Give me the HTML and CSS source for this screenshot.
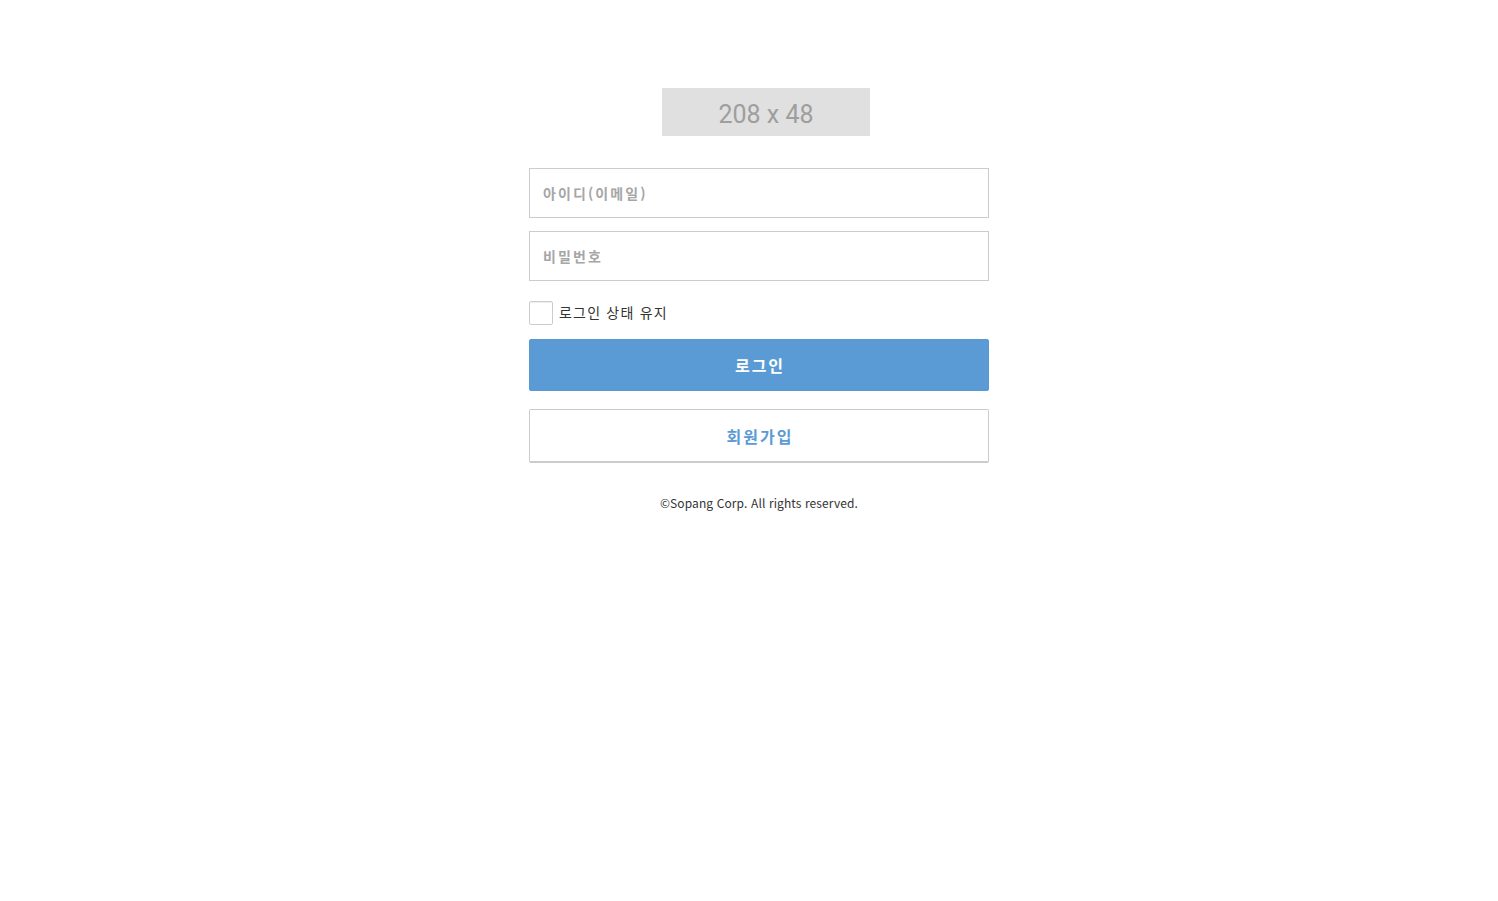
FILE: index.html
```html
<!DOCTYPE html>
<html lang="ko">
<head>
  <meta charset="UTF-8"/>
  <title>로그인</title>
  <link rel="stylesheet" href="styles.css">
</head>
<body>
<div class="page">
  <div class="login-box">
    <div class="logo">208 x 48</div>

    <form class="login-form" onsubmit="return false;">
      <input type="text" class="field" placeholder="아이디(이메일)">
      <input type="password" class="field" placeholder="비밀번호">

      <label class="keep-row">
        <input type="checkbox" class="keep-check">
        <span>로그인 상태 유지</span>
      </label>

      <button type="submit" class="btn-login">로그인</button>
      <button type="button" class="btn-join">회원가입</button>
    </form>

    <p class="copyright">&copy;Sopang Corp. All rights reserved.</p>
  </div>
</div>
</body>
</html>
```

FILE: styles.css
```css
body {
  margin: 0;
  background-color: #fff;
  font-family: "Noto Sans CJK KR", "Noto Sans", sans-serif;
  color: #333;
}
.page {
  width: 480px;
  margin: 0 auto;
  padding: 88px 0 0 20px;
  box-sizing: border-box;
}
.login-box {
  width: 460px;
}
.logo {
  width: 208px;
  height: 48px;
  margin-left: 133px;
  background-color: #e0e0e0;
  color: #9e9e9e;
  font-family: Roboto, "Liberation Sans", sans-serif;
  font-size: 25px;
  line-height: 54px;
  text-align: center;
}
.login-form {
  display: flex;
  flex-direction: column;
  margin-top: 32px;
}
.field {
  height: 50px;
  margin: 0 0 13px;
  padding: 0 13px;
  border: 1px solid #ccc;
  box-sizing: border-box;
  font-family: inherit;
  font-size: 14px;
  letter-spacing: 2.1px;
  outline: none;
}
.field::placeholder {
  color: #a6a6a6;
  font-weight: bold;
}
.keep-row {
  display: flex;
  align-items: center;
  gap: 6px;
  margin: 7px 0 14px;
  font-size: 14px;
  letter-spacing: 1.2px;
  line-height: 20px;
  color: #333;
  cursor: pointer;
}
.keep-row span {
  margin-top: -2px;
}
.keep-check {
  appearance: none;
  width: 24px;
  height: 24px;
  margin: 0;
  border: 1px solid #ccc;
  border-radius: 2px;
  box-sizing: border-box;
  background-color: #fff;
  box-shadow: inset 0 1px 0 #eee;
}
.keep-check:checked {
  background-color: #5b9bd5;
  border-color: #5b9bd5;
}
.btn-login {
  height: 52px;
  border: 1px solid #5899d3;
  border-radius: 2px;
  background-color: #5b9bd5;
  color: #fff;
  font-family: inherit;
  font-size: 16px;
  font-weight: bold;
  letter-spacing: 2px;
  text-indent: 2px;
  cursor: pointer;
}
.btn-join {
  height: 54px;
  margin-top: 18px;
  border: 1px solid #ccc;
  border-bottom-width: 2px;
  border-radius: 2px;
  background-color: #fff;
  color: #5b9bd5;
  font-family: inherit;
  font-size: 16px;
  font-weight: bold;
  letter-spacing: 2px;
  text-indent: 2px;
  cursor: pointer;
}
.copyright {
  margin: 31px 0 0;
  font-size: 12px;
  letter-spacing: 0.1px;
  color: #333;
  text-align: center;
}
```
